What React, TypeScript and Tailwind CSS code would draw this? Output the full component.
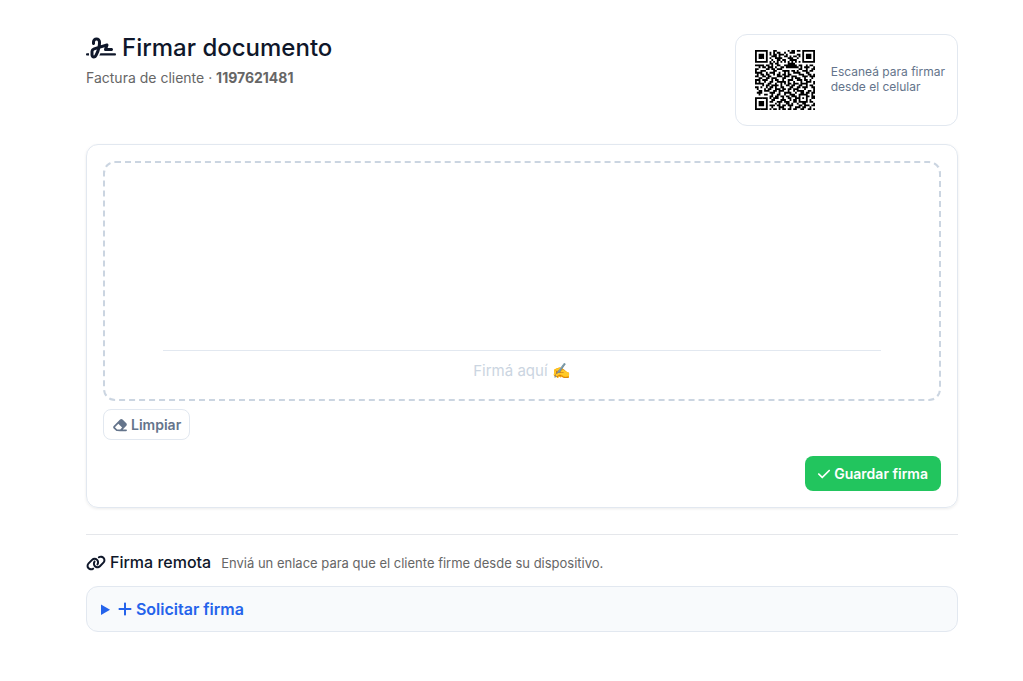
import { FaSignature, FaEraser, FaCheck, FaLink, FaPlus } from 'react-icons/fa6';

const QR_ROWS = [
  '111111100011000000101101101111111',
  '100000101010110010011100001000001',
  '101110101011011101000001101011101',
  '101110100111010011010110101011101',
  '101110101001111000111001001011101',
  '100000100100110110011110001000001',
  '111111101010101010101010101111111',
  '000000001101100000111100000000000',
  '111110110100110011111110110010110',
  '001011011101001101111111010111001',
  '110000110110111000000000110010011',
  '100111000011000111101101001110110',
  '111100101110010010100111100011000',
  '010110110010110110110000111001101',
  '110011011000111011101110001110111',
  '001100110111000110001011100100010',
  '111011100101100100111001110110100',
  '101001001100111110100100010011101',
  '111110011001001010110111011110001',
  '000010110111101001101100110010110',
  '110100101101001100011001101110011',
  '010001011001110110110111000100001',
  '001101110011011100100101111001101',
  '011100001110010011110010011011011',
  '001001100100110010011100111110010',
  '000000001101101101101110100011011',
  '111111101011100100110011101010011',
  '100000100110001110010110100010100',
  '101110101100111011100110111110110',
  '101110100001010001101001001100001',
  '101110101110110110111000110111011',
  '100000100100011100010011101100100',
  '111111101011010110110110011001101',
];

const QR_PATH = QR_ROWS.flatMap((row, y) =>
  [...row].map((cell, x) => (cell === '1' ? `M${x} ${y}h1v1h-1z` : '')),
).join('');

export default function App() {
  return (
    <main className="bg-white pt-[34px] pr-[65px] pb-12 pl-[86px] font-['Inter',sans-serif] text-[#0f172a]">
      <header className="flex items-start justify-between">
        <div>
          <h1 className="flex items-center gap-1.5 text-2xl leading-[27px] font-medium">
            <FaSignature className="h-6 w-[30px]" />
            Firmar documento
          </h1>
          <p className="mt-[7px] text-sm leading-5 text-[#666]">
            Factura de cliente · <strong className="font-bold">1197621481</strong>
          </p>
        </div>
        <aside className="flex items-center gap-4 rounded-xl border border-[#e2e8f0] py-[15px] pr-3 pl-[19px]">
          <svg
            role="img"
            aria-label="Código QR"
            viewBox="0 0 33 33"
            className="size-[60px]"
          >
            <path d={QR_PATH} fill="#000" />
          </svg>
          <p className="pb-0.5 text-xs leading-[15px] text-[#64748b]">
            Escaneá para firmar
            <br />
            desde el celular
          </p>
        </aside>
      </header>

      <section className="mt-[18px] rounded-xl border border-[#e2e8f0] p-4 shadow-[0_1px_3px_rgba(0,0,0,0.08)]">
        <div className="flex h-60 flex-col justify-end rounded-xl border-2 border-dashed border-[#cbd5e1] px-[58px] pb-4">
          <p className="border-t border-[#e2e8f0] pt-2 text-center text-[15px] leading-6 text-[#cbd5e1]">
            Firmá aquí ✍️
          </p>
        </div>
        <button
          type="button"
          className="mt-2 flex items-center gap-[3px] rounded-lg border border-[#e2e8f0] bg-white px-2 py-1 text-sm leading-[21px] font-semibold text-[#64748b]"
        >
          <FaEraser className="h-3.5 w-4" />
          Limpiar
        </button>
        <div className="mt-4 flex justify-end">
          <button
            type="button"
            className="flex items-center gap-[3px] rounded-lg bg-[#22c55e] py-[7px] pr-[13px] pl-3 text-sm leading-[21px] font-semibold text-white"
          >
            <FaCheck className="size-3.5" />
            Guardar firma
          </button>
        </div>
      </section>

      <section className="mt-[26px] border-t border-[#e5e7eb] pt-4">
        <div className="flex items-center gap-2.5">
          <h2 className="flex items-center gap-1 text-base leading-[23px] font-medium">
            <FaLink className="h-4 w-5" />
            Firma remota
          </h2>
          <p className="text-[13px] leading-5 text-[#666]">
            Enviá un enlace para que el cliente firme desde su dispositivo.
          </p>
        </div>
        <details className="mt-3 rounded-xl border border-[#e2e8f0] bg-[#f8fafc] px-3.5 py-2.5">
          <summary className="cursor-pointer text-base leading-6 font-semibold text-[#2563eb]">
            <FaPlus className="mr-[3px] -ml-px inline size-4 align-[-2px]" />
            Solicitar firma
          </summary>
        </details>
      </section>
    </main>
  );
}
